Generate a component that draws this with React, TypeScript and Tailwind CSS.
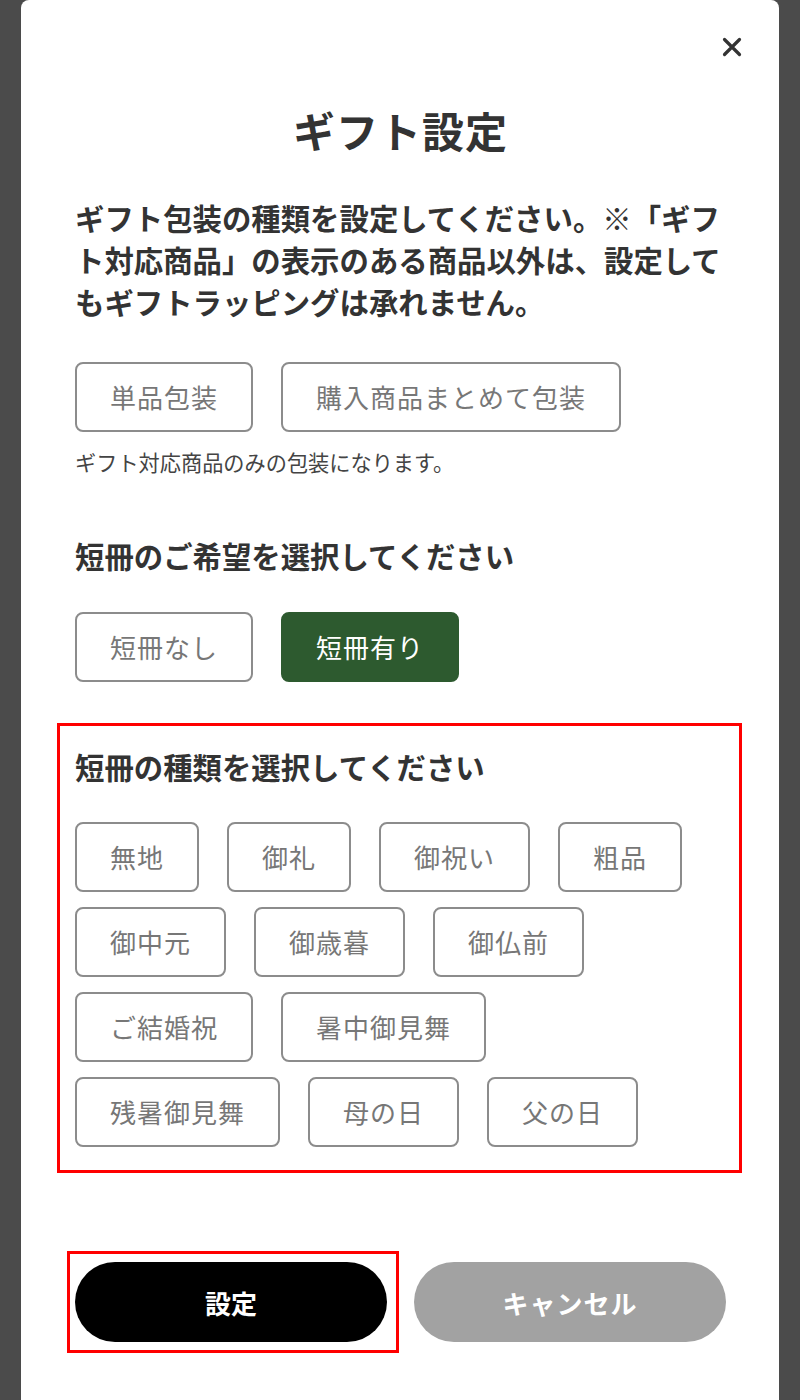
import React from "react";

const FONT = { fontFamily: '"Noto Sans CJK JP", "Noto Sans", sans-serif' };

function OptButton({ label, active = false }: { label: string; active?: boolean }) {
  return (
    <button
      className={
        active
          ? "h-[70px] px-[33px] rounded-[8px] border-2 border-[#2d5a2f] bg-[#2d5a2f] text-white text-[26px] tracking-[1px] leading-none whitespace-nowrap"
          : "h-[70px] px-[33px] rounded-[8px] border-2 border-[#8c8c8c] bg-white text-[#777777] text-[26px] tracking-[1px] leading-none whitespace-nowrap"
      }
    >
      {label}
    </button>
  );
}

const rows = [
  ["無地", "御礼", "御祝い", "粗品"],
  ["御中元", "御歳暮", "御仏前"],
  ["ご結婚祝", "暑中御見舞"],
  ["残暑御見舞", "母の日", "父の日"],
];

export default function App() {
  return (
    <div className="min-h-[1400px] bg-[#4b4b4b] flex justify-center" style={FONT}>
      <div className="w-[758px] h-[1400px] bg-white rounded-t-[8px] pl-[54px] pr-[53px] flex flex-col text-[#333333]">
        <div className="pt-[37px] flex justify-end -mr-[16px]">
          <svg width="20" height="20" viewBox="0 0 20 20" aria-label="close">
            <path d="M2.5 2.5 L17.5 17.5 M17.5 2.5 L2.5 17.5" stroke="#333" strokeWidth="3.2" strokeLinecap="round" />
          </svg>
        </div>

        <h1 className="mt-[45px] text-center text-[42px] leading-[56px] font-bold tracking-[1px]">ギフト設定</h1>

        <p className="mt-[38px] text-[29.4px] leading-[42px] font-bold whitespace-nowrap">
          ギフト包装の種類を設定してください。※「ギフ
          <br />
          ト対応商品」の表示のある商品以外は、設定して
          <br />
          もギフトラッピングは承れません。
        </p>

        <div className="mt-[40px] flex gap-[28px]">
          <OptButton label="単品包装" />
          <OptButton label="購入商品まとめて包装" />
        </div>

        <p className="mt-[16px] text-[21.2px] leading-[28px] text-[#444444]">ギフト対応商品のみの包装になります。</p>

        <h2 className="mt-[58px] text-[29.4px] leading-[42px] font-bold">短冊のご希望を選択してください</h2>

        <div className="mt-[36px] flex gap-[28px]">
          <OptButton label="短冊なし" />
          <OptButton label="短冊有り" active />
        </div>

        <section className="mt-[41px] -ml-[18px] -mr-[16px] border-[3px] border-[#ff0000] pl-[15px] pr-[13px] pt-[19px] pb-[23px]">
          <h2 className="text-[29.4px] leading-[42px] font-bold">短冊の種類を選択してください</h2>
          <div className="mt-[35px] flex flex-col gap-[15px]">
            {rows.map((row, i) => (
              <div key={i} className="flex gap-[28px]">
                {row.map((l) => (
                  <OptButton key={l} label={l} />
                ))}
              </div>
            ))}
          </div>
        </section>

        <div className="mt-[89px] grid grid-cols-2 gap-[27px]">
          <div className="relative">
            <button className="w-full h-[80px] rounded-full bg-black text-white text-[26px] font-bold">設定</button>
            <div className="absolute -left-[8px] -right-[12px] -top-[11px] -bottom-[11px] border-[3px] border-[#ff0000] pointer-events-none" />
          </div>
          <button className="w-full h-[80px] rounded-full bg-[#a2a2a2] text-white text-[26px] font-bold tracking-[1px]">キャンセル</button>
        </div>
      </div>
    </div>
  );
}
